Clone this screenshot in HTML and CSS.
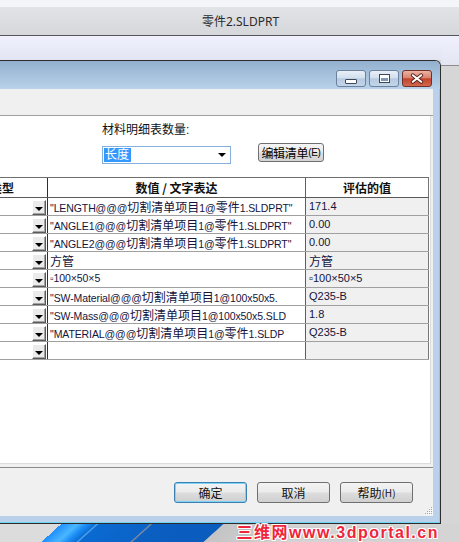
FILE: index.html
```html
<!DOCTYPE html>
<html>
<head>
<meta charset="utf-8">
<title>零件2.SLDPRT</title>
<link rel="stylesheet" href="styles.css">
</head>
<body>
<div class="screen">
  <div class="topline"></div>
  <div class="apptitle">零件2.SLDPRT</div>
  <div class="workspace">
    <div class="dlgcol">
      <div class="band"></div>
      <div class="dialog">
        <div class="caption">
          <div class="capbtn"><span class="ico-min"></span></div>
          <div class="capbtn"><span class="ico-max"></span></div>
          <div class="capbtn close">
            <svg width="30" height="17" viewBox="0 0 30 17"><path d="M10.5 5 L19.5 12 M19.5 5 L10.5 12" stroke="#5b231b" stroke-width="4.2" stroke-linecap="round" fill="none"/><path d="M10.5 5 L19.5 12 M19.5 5 L10.5 12" stroke="#ffffff" stroke-width="2.2" stroke-linecap="round" fill="none"/></svg>
          </div>
        </div>
        <div class="frame">
          <div class="client">
            <div class="strip"></div>
            <div class="panel">
              <div class="controls">
                <div class="qty">
                  <div class="label">材料明细表数量:</div>
                  <div class="combo"><span class="sel">长度</span><span class="arrow"></span></div>
                </div>
                <div class="editbtn">编辑清单 <span class="acc">(E)</span></div>
              </div>
              <div class="grid">
                <div class="row head">
                  <div class="c1"><span class="cut">类型</span></div>
                  <div class="c2">数值 / 文字表达</div>
                  <div class="c3">评估的值</div>
                </div>
                <div class="row">
                  <div class="c1"><span class="dd"></span></div>
                  <div class="c2">"LENGTH@@@<span class="cj">切割清单项目</span>1@<span class="cj">零件</span>1.SLDPRT"</div>
                  <div class="c3">171.4</div>
                </div>
                <div class="row">
                  <div class="c1"><span class="dd"></span></div>
                  <div class="c2">"ANGLE1@@@<span class="cj">切割清单项目</span>1@<span class="cj">零件</span>1.SLDPRT"</div>
                  <div class="c3">0.00</div>
                </div>
                <div class="row">
                  <div class="c1"><span class="dd"></span></div>
                  <div class="c2">"ANGLE2@@@<span class="cj">切割清单项目</span>1@<span class="cj">零件</span>1.SLDPRT"</div>
                  <div class="c3">0.00</div>
                </div>
                <div class="row">
                  <div class="c1"><span class="dd"></span></div>
                  <div class="c2"><span class="cj">方管</span></div>
                  <div class="c3"><span class="cj">方管</span></div>
                </div>
                <div class="row">
                  <div class="c1"><span class="dd"></span></div>
                  <div class="c2">▫100×50×5</div>
                  <div class="c3">▫100×50×5</div>
                </div>
                <div class="row">
                  <div class="c1"><span class="dd"></span></div>
                  <div class="c2">"SW-Material@@@<span class="cj">切割清单项目</span>1@100x50x5.</div>
                  <div class="c3">Q235-B</div>
                </div>
                <div class="row">
                  <div class="c1"><span class="dd"></span></div>
                  <div class="c2">"SW-Mass@@@<span class="cj">切割清单项目</span>1@100x50x5.SLD</div>
                  <div class="c3">1.8</div>
                </div>
                <div class="row">
                  <div class="c1"><span class="dd"></span></div>
                  <div class="c2">"MATERIAL@@@<span class="cj">切割清单项目</span>1@<span class="cj">零件</span>1.SLDP</div>
                  <div class="c3">Q235-B</div>
                </div>
                <div class="row">
                  <div class="c1"><span class="dd"></span></div>
                  <div class="c2"></div>
                  <div class="c3"></div>
                </div>
              </div>
            </div>
            <div class="footer">
              <div class="btn default">确定</div>
              <div class="btn">取消</div>
              <div class="btn">帮助 <span class="acc">(H)</span></div>
              <svg class="grip" width="9" height="9" viewBox="0 0 9 9"><g fill="#a7a7a7"><rect x="7" y="1" width="1" height="1"/><rect x="5" y="3" width="1" height="1"/><rect x="7" y="3" width="1" height="1"/><rect x="3" y="5" width="1" height="1"/><rect x="5" y="5" width="1" height="1"/><rect x="7" y="5" width="1" height="1"/><rect x="1" y="7" width="1" height="1"/><rect x="3" y="7" width="1" height="1"/><rect x="5" y="7" width="1" height="1"/><rect x="7" y="7" width="1" height="1"/></g><g fill="#ffffff"><rect x="8" y="2" width="1" height="1"/><rect x="6" y="4" width="1" height="1"/><rect x="8" y="4" width="1" height="1"/><rect x="4" y="6" width="1" height="1"/><rect x="6" y="6" width="1" height="1"/><rect x="8" y="6" width="1" height="1"/><rect x="2" y="8" width="1" height="1"/><rect x="4" y="8" width="1" height="1"/><rect x="6" y="8" width="1" height="1"/><rect x="8" y="8" width="1" height="1"/></g></svg>
            </div>
          </div>
        </div>
      </div>
    </div>
    <div class="rightstrip">
      <div class="rband"></div>
      <div class="rfill"></div>
    </div>
  </div>
  <div class="desktop"><span class="wm">三维网www.3dportal.cn</span></div>
</div>
</body>
</html>
```

FILE: styles.css
```css
* { box-sizing: border-box; margin: 0; padding: 0; }
html, body { width: 459px; height: 542px; overflow: hidden; background: #d4d4d4; }
body { font-family: "Liberation Sans", "Noto Sans CJK SC", sans-serif; font-size: 12px; color: #000; }

.screen { width: 459px; height: 542px; display: flex; flex-direction: column; overflow: hidden; }
.topline { flex: none; height: 7px; background: #f4f5f9; }
.apptitle {
  flex: none; height: 29px; padding-left: 22px;
  background: linear-gradient(#e2e3e7, #d6d7db);
  border-bottom: 1px solid #55575c;
  display: flex; align-items: center; justify-content: center;
  font-family: "Noto Sans", "Noto Sans CJK SC", sans-serif; font-size: 12px; color: #2b2b2b;
}

.workspace { flex: none; height: 488px; display: flex; }
.dlgcol { width: 441px; flex: none; display: flex; flex-direction: column; }
.band { height: 24px; flex: none; background: linear-gradient(#f0f1fd, #e3e5f2); }

.dialog {
  height: 464px; flex: none; display: flex; flex-direction: column;
  border: 1px solid #2c2c2c; border-left: none; border-top-right-radius: 6px;
  background: #b9d1ea;
}
.caption {
  height: 28px; flex: none; border-top-right-radius: 5px;
  background: linear-gradient(#92b0ce, #b9d2eb);
  display: flex; justify-content: flex-end; align-items: flex-end; gap: 3px;
  padding: 0 8px 2px 0;
}
.capbtn {
  width: 30px; height: 17px; border: 1px solid #6c819e; border-radius: 3px;
  background: linear-gradient(#e8eff8 0%, #d3e0ee 45%, #b6cae0 52%, #c3d5e8 100%);
  display: flex; align-items: center; justify-content: center;
}
.capbtn.close {
  border-color: #6f3128;
  background: linear-gradient(#ebb3a5 0%, #d9846f 45%, #c2432c 52%, #d2684f 100%);
}
.capbtn.close svg { display: block; }
.ico-min { width: 12px; height: 5px; margin-top: 6px; border: 1px solid #3b4858; border-radius: 1px; background: #fff; }
.ico-max { width: 11px; height: 9px; border: 1px solid #3b4858; background: #7f97b5; box-shadow: inset 0 0 0 1px #fff, inset 0 2px 0 1px #fff; }

.frame { flex: 1; display: flex; padding: 0 7px 7px 0; box-shadow: inset -1px -1px 0 #74d3f3; }
.client { width: 433px; height: 427px; background: #f0f0f0; display: flex; flex-direction: column; }
.strip { height: 27px; flex: none; border-bottom: 1px solid #a0a0a0; }
.panel {
  height: 348px; flex: none; margin-right: 2px; background: #fff;
  border-right: 1px solid #dcdcdc; border-bottom: 1px solid #dcdcdc;
  padding-top: 7px;
}

.controls { display: flex; padding-left: 102px; }
.qty { width: 129px; display: flex; flex-direction: column; }
.label { height: 14px; line-height: 14px; font-size: 12px; color: #111; }
.combo {
  margin-top: 9px; height: 18px; border: 1px solid #86b0dc; background: #fff;
  display: flex; align-items: center; padding-left: 1px;
}
.sel { background: #3399ff; color: #fff; height: 14px; line-height: 14px; padding: 0 2px 0 1px; font-size: 12px; }
.arrow { margin-left: auto; margin-right: 4px; width: 0; height: 0; border-left: 4px solid transparent; border-right: 4px solid transparent; border-top: 4px solid #000; }
.editbtn {
  margin-left: 27px; align-self: flex-end; margin-bottom: 2px;
  width: 66px; height: 19px; border: 1px solid #707070; border-radius: 3px;
  background: linear-gradient(#f4f4f4 0%, #ebebeb 48%, #dddddd 52%, #d3d3d3 100%);
  display: flex; align-items: center; justify-content: center; white-space: nowrap;
  font-size: 12px; letter-spacing: -0.3px;
}
.acc { font-size: 10px; }

.grid { margin-top: 13px; width: 429px; border-top: 1px solid #6e6e6e; }
.row { display: grid; grid-template-columns: 48px 258px 123px; height: 18px; border-bottom: 1px solid #a0a0a0; }
.row.head { height: 20px; border-bottom: 1px solid #5a5a5a; font-weight: bold; font-family: "Noto Sans CJK SC", sans-serif; }
.row > div { overflow: hidden; white-space: nowrap; }
.c1 { border-right: 1px solid #2e2e2e; display: flex; }
.c2 { border-right: 1px solid #5e5e5e; padding-left: 2px; line-height: 17px; font-size: 10.5px; letter-spacing: -0.1px; color: #14143c; }
.c3 { border-right: 1px solid #777; padding-left: 3px; line-height: 17px; font-size: 11px; color: #14143c; background: #f0f0f0; }
.head .c2, .head .c3 { background: #fff; text-align: center; font-size: 12px; color: #111; padding-left: 0; line-height: 19px; letter-spacing: 0; }
.head .c1 { align-items: center; }
.cut { margin-left: -10px; font-size: 12px; color: #111; }
.cj { font-size: 12px; letter-spacing: 0; font-family: "Noto Sans CJK SC", sans-serif; }

.dd {
  margin: 2px 0 0 32px; width: 14px; height: 15px; position: relative;
  background: #ebebeb; border: 1px solid; border-color: #fff #5a5a5a #5a5a5a #fff;
  box-shadow: inset -1px -1px 0 #a3a3a3;
  display: flex; align-items: center; justify-content: center;
}
.dd::after {
  content: ""; width: 0; height: 0; margin-top: 2px;
  border-left: 4px solid transparent; border-right: 4px solid transparent; border-top: 4px solid #000;
}

.footer {
  margin-top: 3px; height: 49px; border-top: 1px solid #8c8c8c; position: relative;
  display: flex; justify-content: flex-end; align-items: flex-start; gap: 10px;
  padding: 14px 20px 0 0;
}
.btn {
  width: 73px; height: 21px; border: 1px solid #707070; border-radius: 3px;
  background: linear-gradient(#f3f3f3 0%, #ebebeb 48%, #dddddd 52%, #cfcfcf 100%);
  display: flex; align-items: center; justify-content: center; font-size: 12px; color: #111;
  font-family: "Noto Sans CJK SC", sans-serif;
}
.btn.default { border-color: #3c7fb1; box-shadow: inset 0 0 0 1px #7fd3f6; }
.grip { position: absolute; right: 0; bottom: 1px; }

.rightstrip { flex: 1; display: flex; flex-direction: column; }
.rband { height: 30px; flex: none; background: linear-gradient(#f0f1fd, #e3e5f2); border-bottom: 1px solid #8c8c8c; }
.rfill { flex: 1; background: #d6d6d6; }

.desktop {
  flex: none; height: 18px; display: flex; justify-content: flex-end; align-items: center;
  padding-right: 20px;
  background: linear-gradient(138deg, #dcdcdc 0 41px, #1f8fff 41px, #4ab6ff 52px, #1c8ef5 58px, #0a6fd6 64px, #5ba6ec 65px, #0a6ad0 66.5px, #0b63c8 100px, #8a8f99 101px, #0b5fc2 102.5px, #0a5cbd 149px, #c4c4c4 150px, #d4d4d4 200px);
}
.wm {
  font-family: "Liberation Sans", "Noto Sans CJK SC", sans-serif; font-weight: bold; font-size: 16px;
  letter-spacing: 1.5px; line-height: 18px; color: #f0253a;
  text-shadow: 1px 0 #fff, -1px 0 #fff, 0 1px #fff, 0 -1px #fff, 1px 1px #fff, -1px -1px #fff, 1px -1px #fff, -1px 1px #fff, 0 0 3px #888;
}
```
